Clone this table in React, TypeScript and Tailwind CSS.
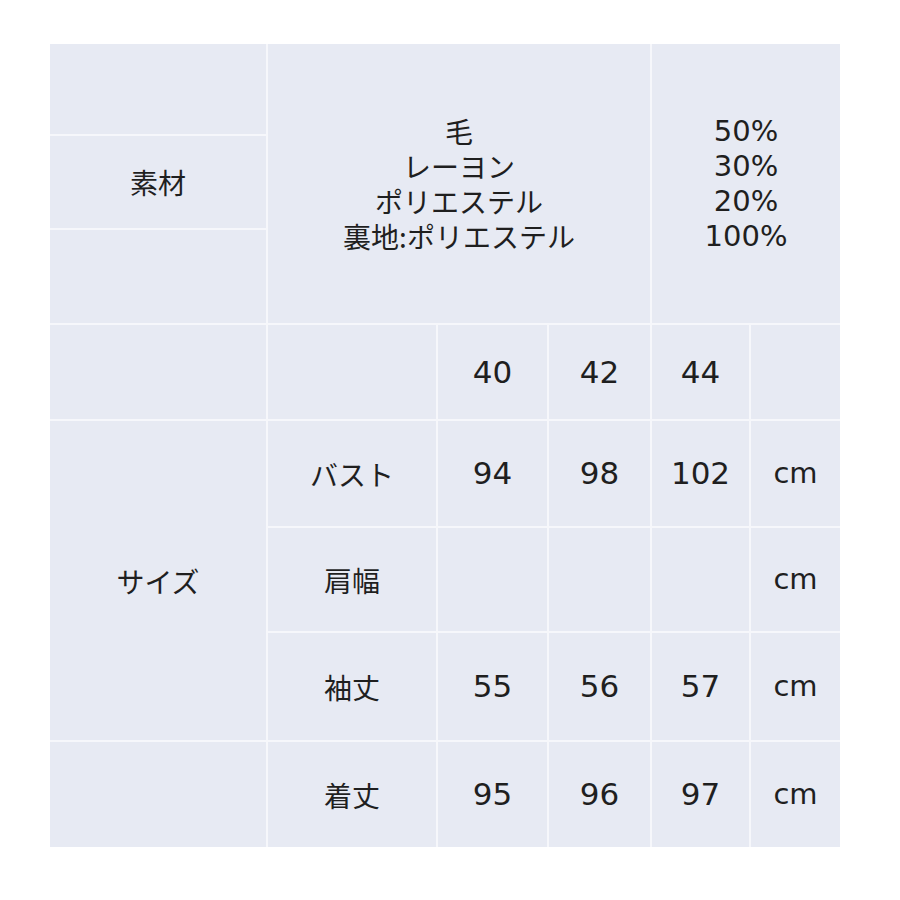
import React from "react";

const font = { fontFamily: '"DejaVu Sans", "Noto Sans CJK JP", sans-serif' };
const jp = { fontFamily: '"Noto Sans CJK JP", sans-serif' };

const Cell = ({ className = "", children }: { className?: string; children?: React.ReactNode }) => (
  <div className={`bg-[#e7eaf3] flex items-center justify-center text-[#1f1f1f] ${className}`}>{children}</div>
);

const rows = [
  { label: "バスト", values: ["94", "98", "102"], unit: "cm" },
  { label: "肩幅", values: ["", "", ""], unit: "cm" },
  { label: "袖丈", values: ["55", "56", "57"], unit: "cm" },
  { label: "着丈", values: ["95", "96", "97"], unit: "cm" },
];

export default function App() {
  return (
    <div className="w-[900px] h-[900px] bg-white pt-[44px] pl-[50px]" style={font}>
      <div className="grid w-[790px] grid-cols-[216px_168px_109px_101px_97px_89px] grid-rows-[90px_92px_93px_94px_105px_103px_107px_105px] gap-[2px] bg-[#f6f7fb] text-[28px]">
        {/* 素材 */}
        <Cell className="col-start-1 row-start-1" />
        <Cell className="col-start-1 row-start-2"><span style={jp}>素材</span></Cell>
        <Cell className="col-start-1 row-start-3" />
        <Cell className="col-start-2 col-span-3 row-start-1 row-span-3 flex-col leading-[35px]">
          <span style={jp}>毛</span>
          <span style={jp}>レーヨン</span>
          <span style={jp}>ポリエステル</span>
          <span style={jp}>裏地:ポリエステル</span>
        </Cell>
        <Cell className="col-start-5 col-span-2 row-start-1 row-span-3 flex-col leading-[35px] text-[29px]">
          <span>50%</span>
          <span>30%</span>
          <span>20%</span>
          <span>100%</span>
        </Cell>

        {/* sizes header */}
        <Cell className="col-start-1 row-start-4" />
        <Cell className="col-start-2 row-start-4" />
        <Cell className="col-start-3 row-start-4 text-[31px]">40</Cell>
        <Cell className="col-start-4 row-start-4 text-[31px]">42</Cell>
        <Cell className="col-start-5 row-start-4 text-[31px]">44</Cell>
        <Cell className="col-start-6 row-start-4" />

        <Cell className="col-start-1 row-start-5 row-span-3"><span style={jp}>サイズ</span></Cell>
        <Cell className="col-start-1 row-start-8" />

        {rows.map((r, i) => (
          <React.Fragment key={r.label}>
            <Cell className={`col-start-2 ${["row-start-5", "row-start-6", "row-start-7", "row-start-8"][i]}`}>
              <span style={jp}>{r.label}</span>
            </Cell>
            {r.values.map((v, j) => (
              <Cell key={j} className="text-[31px]">{v}</Cell>
            ))}
            <Cell className="text-[29px]">{r.unit}</Cell>
          </React.Fragment>
        ))}
      </div>
    </div>
  );
}
